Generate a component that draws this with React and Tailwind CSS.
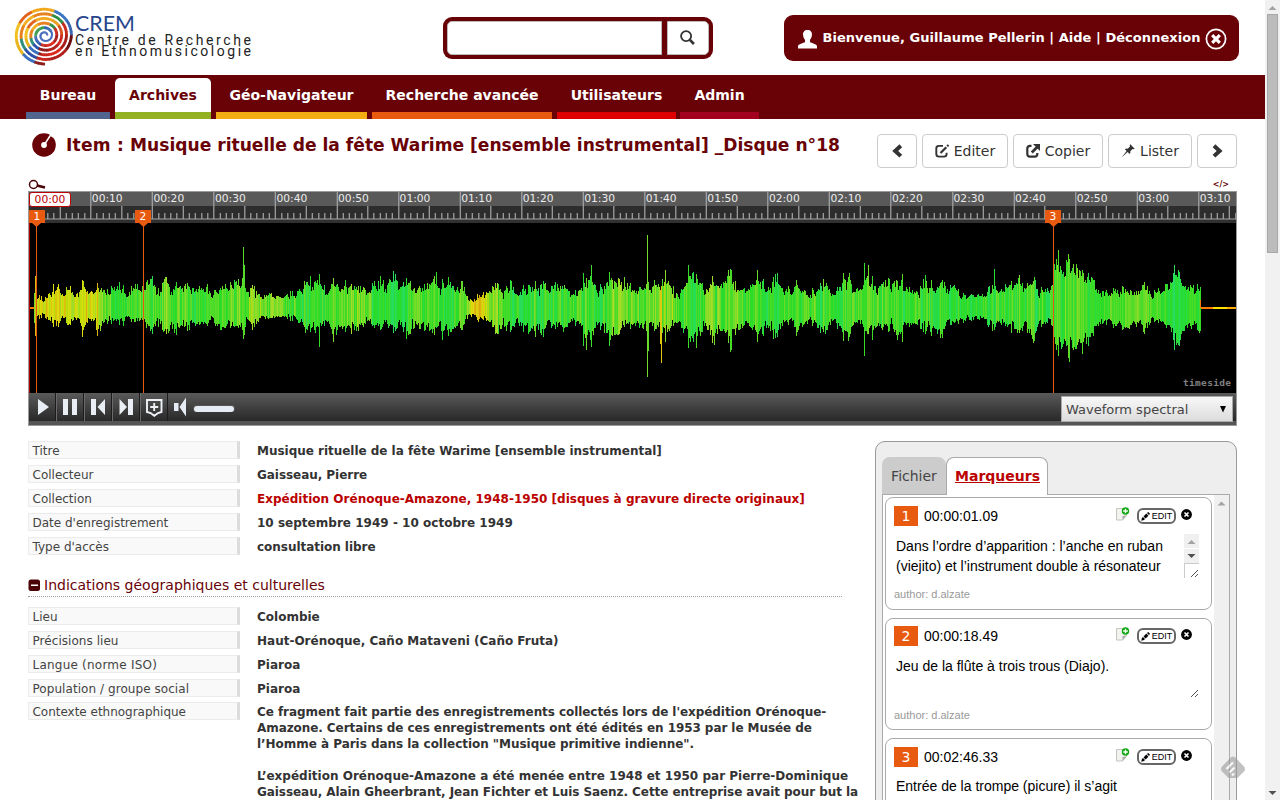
import React from "react";

const rand = (n) => {
  const s = Math.sin(n * 127.1 + 11.7) * 43758.5453;
  return s - Math.floor(s);
};

// [x, height above the axis, height below the axis]
const envelope = [
  [36,12,10],[44,11,9],[49,15,14],[51,10,9],[53,24,22],[58,23,18],[62,17,11],[68,25,21],[74,14,13],[78,15,12],[82,26,25],[86,16,13],[92,20,16],[97,24,27],
  [103,23,20],[108,15,13],[116,27,16],[122,22,16],[130,20,15],[137,21,11],[145,25,17],[152,31,27],[157,18,16],[165,30,25],[172,20,24],[183,28,22],[192,21,20],
  [205,25,21],[212,15,13],[220,20,22],[230,23,17],[237,30,24],[240,30,25],[245,24,18],[252,23,20],[258,17,16],[264,16,12],[275,13,11],[285,13,10],[298,18,14],
  [307,30,27],[314,30,26],[319,28,22],[327,15,15],[333,28,28],[345,25,25],[355,22,22],[365,17,15],[380,28,22],[386,27,20],[393,32,23],[399,24,20],[405,30,28],
  [415,19,19],[423,20,18],[429,32,32],[436,26,20],[441,24,28],[447,30,26],[455,18,21],[462,27,22],[468,11,10],[477,12,13],[485,15,12],[498,24,26],[503,13,15],
  [510,28,28],[517,17,19],[525,21,22],[540,25,27],[550,22,20],[557,23,17],[563,27,27],[572,14,14],[579,18,18],[584,34,38],[590,34,32],[597,19,18],[606,28,28],
  [615,30,33],[625,30,20],[632,18,18],[642,22,21],[650,25,22],[658,24,19],[667,32,29],[672,21,20],[676,16,18],[682,21,22],[689,34,32],[695,33,33],[705,21,22],
  [712,28,31],[720,26,25],[730,36,32],[738,20,22],[746,17,16],[757,36,34],[762,26,25],[770,20,20],[775,34,32],[783,19,15],[792,22,16],[798,25,28],[805,17,17],
  [815,18,18],[825,28,28],[832,12,12],[838,19,20],[844,33,30],[850,31,30],[855,17,14],[862,27,20],[866,32,27],[872,28,28],[877,20,22],[884,30,23],[893,22,18],
  [898,28,33],[903,31,29],[909,18,17],[917,19,21],[926,31,26],[934,20,26],[943,25,26],[953,25,17],[960,13,13],[975,15,13],[987,18,18],[993,26,22],[1000,16,14],
  [1009,24,20],[1018,29,27],[1026,22,20],[1033,29,34],[1040,18,17],[1051,19,15],[1054,50,44],[1059,54,48],[1063,38,40],[1068,52,50],[1074,40,44],[1081,40,38],
  [1086,32,38],[1092,34,29],[1098,16,16],[1110,16,16],[1121,22,22],[1130,18,22],[1137,17,16],[1143,24,24],[1151,14,14],[1160,18,14],[1168,22,18],[1174,43,42],
  [1181,27,29],[1190,22,20],[1196,22,22],[1200,19,24],
];

const spikes = {
  34: [15, 15], 35: [32, 28], 97: [25, 28], 152: [32, 26], 166: [31, 26], 243: [61, 31], 244: [43, 27], 319: [34, 39], 333: [30, 34], 393: [37, 25], 436: [36, 20],
  498: [24, 26], 583: [35, 38], 586: [30, 42], 591: [43, 39], 609: [36, 38], 647: [73, 69], 648: [26, 43], 660: [18, 36], 661: [22, 55], 665: [38, 34], 688: [43, 40],
  693: [36, 34], 696: [34, 40], 714: [22, 37], 730: [39, 44], 731: [38, 42], 757: [38, 34], 775: [34, 30], 864: [45, 48], 868: [43, 26], 902: [34, 34], 925: [33, 26],
  942: [28, 30], 994: [39, 22], 1019: [33, 25], 1058: [58, 48], 1068: [54, 50], 1082: [38, 46], 1174: [43, 42],
};

// [x, hue, amount of variation]
const hues = [
  [36,64,20],[54,60,18],[100,68,25],[106,108,26],[165,104,28],[200,116,22],[245,96,26],[275,92,26],[300,116,28],[330,118,28],[352,94,26],[375,118,26],[400,130,24],
  [425,106,28],[450,118,26],[466,98,20],[471,60,10],[479,50,8],[492,88,24],[512,122,28],[535,120,28],[575,112,30],[600,118,28],[620,88,18],[640,104,28],[670,94,28],
  [690,116,30],[730,96,26],[760,122,26],[800,112,28],[830,116,26],[880,106,28],[925,122,26],[990,116,26],[1030,114,30],[1058,122,30],[1080,99,28],[1095,121,20],
  [1130,98,16],[1160,108,16],[1172,129,12],[1200,115,16],
];

const lerp = (points, x) => {
  let i = 0;
  while (i < points.length - 2 && points[i + 1][0] < x) i += 1;
  const a = points[i];
  const b = points[i + 1];
  const t = Math.min(1, Math.max(0, (x - a[0]) / (b[0] - a[0])));
  return a.map((v, k) => v + (b[k] - v) * t);
};

const bars = [];
for (let x = 34; x <= 1200; x += 1) {
  const [, up, down] = lerp(envelope, x);
  const group = rand(Math.floor(x / 3) + 500);
  const pair = rand(Math.floor(x / 2) + 1500);
  const peak = rand(x + 5000) > 0.88 ? 0.3 : 0;
  const f = 0.44 + 0.22 * group + 0.28 * pair + 0.26 * rand(x) + peak;
  const g = 0.42 + 0.22 * group + 0.28 * pair + 0.26 * rand(x + 3000) + peak;
  const spike = spikes[x];
  const [, hue, spread] = lerp(hues, x);
  let h = hue + (rand(Math.floor(x / 3) + 900) - 0.5) * spread + (rand(x + 7000) - 0.5) * spread * 1.3;
  if (x === 660 || x === 661) h = 54;
  if (x === 34 || x === 647) h = 95;
  h = Math.max(44, Math.min(138, h));
  bars.push({
    x,
    up: Math.round(spike ? spike[0] : up * Math.min(1.15, f)),
    down: Math.round(spike ? spike[1] : down * Math.min(1.15, g)),
    color: h < 75 ? `hsl(${h} 88% 46%)` : `hsl(${h} 72% 51%)`,
  });
}

const SECOND = 6.155;

function Ruler() {
  const ticks = [];
  for (let s = 1; s <= 196; s += 1) ticks.push(s);
  return (
    <svg width="1207" height="31" className="block" fontFamily="'DejaVu Sans', sans-serif" fontSize="10.7">
      <rect width="1207" height="14" fill="#595959" />
      <rect y="14" width="1207" height="12" fill="#2d2d2d" />
      <rect y="26" width="1207" height="3" fill="#6a6a6a" />
      <rect y="28" width="1207" height="3" fill="#303030" />
      {ticks.map((s) => {
        const x = Math.round(s * SECOND * 2) / 2 - 0.3;
        const y = s % 10 === 0 ? 0 : s % 5 === 0 ? 14 : 21;
        return <rect key={s} x={x} y={y} width="1.2" height={27 - y} fill="#a6a6a6" />;
      })}
      {Array.from({ length: 19 }, (_, i) => {
        const s = (i + 1) * 10;
        const label = `0${Math.floor(s / 60)}:${String(s % 60).padStart(2, "0")}`;
        return (
          <text key={s} x={s * SECOND + 1.3} y="10" fill="#ececec">
            {label}
          </text>
        );
      })}
    </svg>
  );
}

function Waveform() {
  return (
    <svg width="1207" height="170" viewBox="29 223 1207 170" shapeRendering="crispEdges" className="block bg-black">
      <rect x="29" y="307" width="6" height="2" fill="#ff7a00" />
      {bars.map((b) => (
        <rect key={b.x} x={b.x} y={308 - b.up} width="1" height={b.up + b.down} fill={b.color} />
      ))}
      <rect x="1200" y="300" width="1" height="8" fill="#ff7a00" />
      <rect x="1201" y="307" width="12" height="2" fill="#ff7a00" />
      <rect x="1213" y="307" width="14" height="2" fill="#ffe000" />
      <rect x="1227" y="307" width="9" height="2" fill="#ffa800" />
      <text x="1183" y="386" fontFamily="'DejaVu Sans Mono', monospace" fontSize="9.500" fontWeight="bold" textLength="48" fill="#808080">
        timeside
      </text>
    </svg>
  );
}

const spiralColor = (deg, ring) => {
  if (ring === 0) return "#2b56b0";
  if (ring === 1) return deg < 90 ? "#3565b5" : deg < 180 ? "#3b9a50" : "#3560b5";
  const even = ring % 2 === 0;
  if (deg < 35) return ring > 4 ? "#3a66b4" : even ? "#c8281e" : "#d8501e";
  if (deg < 65) return ring > 4 ? "#3a76c4" : even ? "#2f8f45" : "#e8a020";
  if (deg < 115) return even ? "#e8801e" : "#f2a81e";
  if (deg < 150) return even ? "#f0b020" : "#e0641e";
  if (deg < 185) return even ? "#e8801e" : "#f2c020";
  if (deg < 215) return even ? "#2f8f7a" : "#e8b41e";
  if (deg < 245) return even ? "#2a50a8" : "#3a70c0";
  if (deg < 275) return even ? "#c8281e" : "#8e1c1c";
  if (deg < 320) return even ? "#dd2a1e" : "#b0201a";
  return ring > 4 ? "#6a1012" : even ? "#a81c1a" : "#d02a1e";
};

function Spiral() {
  const cx = 45;
  const cy = 35.5;
  const turns = 5.75;
  const steps = 300;
  const point = (t) => {
    const a = t * turns * 2 * Math.PI;
    const r = 2 + t * 26.6;
    return [cx + 1.05 * r * Math.cos(a), cy - r * Math.sin(a), a, r];
  };
  return (
    <g fill="none">
      {Array.from({ length: steps }, (_, i) => {
        const [x1, y1, a, r] = point(i / steps);
        const [x2, y2] = point(Math.min(1, (i + 1.3) / steps));
        const deg = ((a * 180) / Math.PI) % 360;
        return <path key={i} d={`M${x1} ${y1}L${x2} ${y2}`} stroke={spiralColor(deg, Math.floor(r / 4.8))} strokeWidth={r < 7 ? 2 : 2.8} />;
      })}
    </g>
  );
}

function Logo() {
  return (
    <svg width="265" height="75" className="block shrink-0">
      <Spiral />
      <text x="75" y="30.500" fontFamily="Lato, sans-serif" fontSize="20.500" textLength="60" lengthAdjust="spacingAndGlyphs" fill="#27468c">CREM</text>
      <g fontFamily="Roboto, sans-serif" fontSize="14" fill="#222">
        <text x="75" y="44.500" textLength="176">Centre de Recherche</text>
        <text x="75" y="55.500" textLength="176">en Ethnomusicologie</text>
      </g>
    </svg>
  );
}

function Header() {
  return (
    <header className="flex h-[75px] shrink-0 items-start">
      <Logo />
      <div className="mt-[17px] ml-[178px] flex h-[42px] w-[270px] gap-[5px] rounded-[9px] bg-[#690207] p-1">
        <div className="w-[215px] rounded-l-[5px] border border-[#bbb] bg-white" />
        <div className="flex flex-1 items-center justify-center rounded-r-[5px] border border-[#bbb] bg-white">
          <svg width="15" height="15" viewBox="0 0 14 14" fill="none" stroke="#333" className="-mt-px -ml-[2px]">
            <circle cx="5.700" cy="5.700" r="4.700" strokeWidth="1.700" />
            <path d="M9 9l4 4" strokeWidth="2.500" />
          </svg>
        </div>
      </div>
      <div className="mt-[15px] ml-[71px] flex h-[46px] w-[455px] items-center rounded-[9px] bg-[#690207] pl-[13px] text-[13px] font-bold whitespace-nowrap text-white">
        <svg width="21" height="21" viewBox="0 0 21 21" fill="#fff" className="mt-[2px] shrink-0">
          <path d="M10.500 1C7.400 1 5.700 3 6.100 6.300c.2 2.200 1.100 3.400 1.900 4.500v2.100C6.800 13.900 1 15 1 17.200V19.500h19V17.200c0-2.200-5.800-3.300-7-4.300v-2.100c.8-1.100 1.700-2.300 1.900-4.500C15.300 3 13.600 1 10.500 1z" />
        </svg>
        <span className="ml-[4.500px] tracking-[0.045px]">Bienvenue, Guillaume Pellerin | Aide | Déconnexion</span>
        <svg width="22" height="22" viewBox="0 0 22 22" fill="none" stroke="#fff" className="ml-1 mt-px shrink-0">
          <circle cx="11" cy="11" r="9.600" strokeWidth="1.700" />
          <path d="M7.200 7.200l7.600 7.600M14.800 7.200l-7.600 7.600" strokeWidth="3.200" />
        </svg>
      </div>
    </header>
  );
}

const tabs = [
  ["Bureau", "w-[84px] border-[#52658f] text-white"],
  ["Archives", "ml-[5px] w-[96px] rounded-t-[5px] bg-white border-[#93b122] text-[#690207]"],
  ["Géo-Navigateur", "ml-[5px] w-[151px] border-[#f3ae14] text-white"],
  ["Recherche avancée", "ml-[5px] w-[180px] border-[#e85a10] text-white"],
  ["Utilisateurs", "ml-[5px] w-[119px] border-[#de0000] text-white"],
  ["Admin", "ml-1 w-[79px] border-[#a3001f] text-white"],
];

function Nav() {
  return (
    <nav className="flex h-[44px] shrink-0 bg-[#690207] pt-[3px] pl-[26px] text-[14px] font-bold">
      {tabs.map(([name, cls]) => (
        <a key={name} className={`flex h-[41px] items-center justify-center border-b-[7px] whitespace-nowrap ${cls}`}>
          {name}
        </a>
      ))}
    </nav>
  );
}

const glyphs = {
  left: <path d="M10.800 1.800L5.200 6.900l5.600 5.200" fill="none" stroke="#333" strokeWidth="4" />,
  right: <path d="M4 1.800L9.600 6.900L4 12.100" fill="none" stroke="#333" strokeWidth="4" />,
  edit: (
    <g fill="none" stroke="#333">
      <path d="M8 1.900H4Q1.300 1.900 1.300 4.500V10Q1.300 12.600 4 12.600H9Q11.600 12.600 11.600 10V8.800" strokeWidth="1.900" />
      <path d="M5.500 9L11.300 3.200" strokeWidth="2.200" />
      <path d="M12.200 2.300L13.500 1" strokeWidth="2.200" />
    </g>
  ),
  share: (
    <g fill="none" stroke="#333">
      <path d="M5.500 1.900H4Q1.300 1.900 1.300 4.500V10Q1.300 12.600 4 12.600H8.700Q11.300 12.600 11.300 10V9" strokeWidth="2.200" />
      <path d="M5.800 8.500L11 3.300" strokeWidth="2.800" />
      <path d="M7 0H14V7z" fill="#333" stroke="none" />
    </g>
  ),
  pin: <path d="M9.300.3L13.700 4.700 12.600 5.300 11.600 5 9.300 7.300Q9.700 8.900 8.700 9.900L6.600 7.900.600 13.400 5.600 6.900 3.900 5.200Q5 4.300 6.700 4.700L9 2.400 8.700 1.300z" fill="#333" />,
};

function Button({ glyph, label, cls }) {
  return (
    <button className={`flex h-[34px] items-center justify-center gap-[5px] rounded-[4px] border border-[#ccc] bg-white text-[14px] text-[#333] ${cls}`}>
      <svg width="14" height="14" viewBox="0 0 14 14" className="-mt-px shrink-0">{glyphs[glyph]}</svg>
      {label && <span>{label}</span>}
    </button>
  );
}

function TitleRow() {
  return (
    <div className="flex h-[72px] shrink-0 pt-[15px] pr-[28px] pl-[32px]">
      <svg width="24" height="24" viewBox="0 0 24 24" className="mt-[-1px] shrink-0">
        <circle cx="12" cy="12" r="11.800" fill="#690207" />
        <circle cx="12" cy="12" r="2.900" fill="#fff" />
        <path d="M12.800 11L18.300 2.500" stroke="#fff" strokeWidth="1.500" />
        <path d="M17.700 0L22.500 3 20.500 4.600 18 2.600z" fill="#fff" />
      </svg>
      <h1 className="ml-[10px] w-[811px] text-[17.100px] leading-[22px] font-bold whitespace-nowrap text-[#690207]">
        <span className="tracking-[0.200px]">Item : </span>Musique rituelle de la fête Warime [ensemble instrumental] _Disque n°18
      </h1>
      <div className="flex gap-[5px]">
        <Button glyph="left" cls="w-[40px]" />
        <Button glyph="edit" label="Editer" cls="w-[86px]" />
        <Button glyph="share" label="Copier" cls="w-[90px]" />
        <Button glyph="pin" label="Lister" cls="w-[84px]" />
        <Button glyph="right" cls="w-[40px]" />
      </div>
    </div>
  );
}

function Marker({ n, cls, line }) {
  return (
    <div className={`absolute top-[18px] w-4 ${cls}`}>
      <div className="h-[13px] bg-[#e85a10] text-center text-[10.700px] leading-[13px] text-white">{n}</div>
      <svg width="16" height="170" className="block">
        <path d={`M${line - 4} 0h9l-4.500 4z`} fill="#e85a10" />
        <rect x={line} width="1" height="170" fill="#e85a10" />
      </svg>
    </div>
  );
}

const controls = [
  <path d="M9 6L20 14 9 22z" />,
  <path d="M6 6h5v16H6zM15 6h5v16h-5z" />,
  <path d="M6 6h5v16H6zM20 6v16L12.500 14z" />,
  <path d="M6.500 6v16L14 14zM15 6h5v16h-5z" />,
  <path d="M6 7h14.500v12l-3.500 1-3.700 2.800-3.700-2.800-3.600-1zM13.200 10v8M9.200 14h8" fill="none" stroke="#eef2f6" strokeWidth="1.900" />,
];

function Player() {
  return (
    <section className="relative ml-[28px] flex h-[235px] w-[1209px] shrink-0 flex-col border border-[#9a9a9a] bg-[#555]">
      <Ruler />
      <Waveform />
      <div className="flex h-[28px] bg-linear-to-b from-[#5a5a5a] to-[#292929]">
        {controls.map((c, i) => (
          <div key={i} className="w-[28px] border-r border-l border-r-[#1c1c1c] border-l-[#6a6a6a] first:w-[27px] first:border-l-0">
            <svg width="26" height="28" fill="#e9eef4">{c}</svg>
          </div>
        ))}
        <svg width="70" height="28" fill="#e6ecf4" className="ml-px">
          <path d="M5 10h4.500v8H5zM10.500 14L17 4.500v19z" />
          <rect x="24" y="12" width="42" height="7" rx="3.500" fill="#555" />
          <rect x="25" y="13" width="40" height="6" rx="3" />
        </svg>
        <div className="mt-[3px] mr-[3px] ml-auto flex h-[26px] w-[172px] items-center justify-between border border-[#a9a9a9] bg-linear-to-b from-[#f8f8f8] to-[#dcdcdc] pr-[6px] pl-1 text-[13px] text-[#444]">
          <span className="mt-px">Waveform spectral</span>
          <svg width="6" height="7"><path d="M0 0h6L3 6.500z" /></svg>
        </div>
      </div>
      <div className="absolute top-[26px] left-0 h-[175px] w-px bg-[#b00000]" />
      <div className="absolute top-0 left-0 h-[15px] w-[42px] rounded-[3px] border border-[#bb0000] bg-white text-center text-[10.700px] leading-[13px] text-[#bb0000]">00:00</div>
      <Marker n="1" cls="left-0" line={7} />
      <Marker n="2" cls="left-[106px]" line={8} />
      <Marker n="3" cls="left-[1016px]" line={8} />
    </section>
  );
}

function Field({ label, children, cls = "h-[24px]", labelCls = "" }) {
  return (
    <div className={`flex ${cls}`}>
      <div className="h-[18px] w-[212px] shrink-0 border border-r-[3px] border-[#ebebeb] border-r-[#dcdcdc] bg-[#f9f9f9] pl-[3.500px] text-[12px] leading-[18px] text-[#444]">
        <span className={labelCls}>{label}</span>
      </div>
      <div className="ml-[17px] pt-[2px] text-[12px] leading-[16px] font-bold whitespace-nowrap text-[#333]">{children}</div>
    </div>
  );
}

function Details() {
  return (
    <div className="w-[847px] shrink-0">
      <Field label="Titre"><span className="tracking-[-0.025px]">Musique rituelle de la fête Warime [ensemble instrumental]</span></Field>
      <Field label="Collecteur"><span className="tracking-[-0.050px]">Gaisseau, Pierre</span></Field>
      <Field label="Collection"><a className="tracking-[0.015px] text-[#bb0000]">Expédition Orénoque-Amazone, 1948-1950 [disques à gravure directe originaux]</a></Field>
      <Field label="Date d'enregistrement"><span className="tracking-[0.020px]">10 septembre 1949 - 10 octobre 1949</span></Field>
      <Field label="Type d'accès"><span className="tracking-[-0.040px]">consultation libre</span></Field>
      <div className="mt-[15px] mb-[10px] flex h-[21px] w-[814px] items-center gap-1 border-b border-dotted border-[#999] pb-[2px] text-[14px] text-[#690207]">
        <svg width="12" height="12"><rect x=".5" y=".5" width="11.500" height="11.500" rx="2.500" fill="#4a0306" /><rect x="3" y="5.500" width="7" height="1.500" fill="#fff" /></svg>
        Indications géographiques et culturelles
      </div>
      <Field label="Lieu">Colombie</Field>
      <Field label="Précisions lieu" labelCls="tracking-[0.050px]">Haut-Orénoque, Caño Mataveni (Caño Fruta)</Field>
      <Field label="Langue (norme ISO)" labelCls="tracking-[0.220px]">Piaroa</Field>
      <Field label="Population / groupe social" cls="h-[23px]" labelCls="tracking-[0.060px]">Piaroa</Field>
      <Field label="Contexte ethnographique" cls="h-[120px]" labelCls="tracking-[-0.020px]">
        <span className="tracking-[-0.065px]">Ce fragment fait partie des enregistrements collectés lors de l'expédition Orénoque-</span><br />
        <span className="tracking-[-0.075px]">Amazone. Certains de ces enregistrements ont été édités en 1953 par le Musée de</span><br />
        <span className="tracking-[-0.035px]">l’Homme à Paris dans la collection "Musique primitive indienne".</span><br />
        <br />
        <span className="tracking-[0.010px]">L’expédition Orénoque-Amazone a été menée entre 1948 et 1950 par Pierre-Dominique</span><br />
        <span className="tracking-[-0.062px]">Gaisseau, Alain Gheerbrant, Jean Fichter et Luis Saenz. Cette entreprise avait pour but la</span>
      </Field>
    </div>
  );
}

function Card({ n, time, lines, scroll, cls, textCls = "mt-2", authorCls = "mt-[9px]" }) {
  return (
    <div className={`w-[327px] shrink-0 rounded-[8px] border border-[#aaa] bg-white px-2 font-['Liberation_Sans',Arial,sans-serif] text-black ${cls}`}>
      <div className="flex h-5">
        <div className="h-5 w-6 bg-[#e85a10] text-center font-['DejaVu_Sans',sans-serif] text-[14px] leading-[20px] text-white">{n}</div>
        <span className="ml-[6px] w-[192px] text-[14px] leading-[20px]">{time}</span>
        <svg width="14" height="14" className="mt-[1px] shrink-0">
          <path d="M.5 1.500h10v7l-4 4.500h-6z" fill="#f2f2ee" stroke="#c4c4c0" />
          <path d="M10.500 8.500l-4 4.500v-4z" fill="#aaa" />
          <circle cx="9.500" cy="4" r="3.700" fill="#10a810" />
          <path d="M9.500 1.700v4.600M7.200 4h4.600" stroke="#fff" strokeWidth="1.300" />
        </svg>
        <div className="mt-[2px] ml-[7px] flex h-4 w-[39px] shrink-0 items-center justify-center gap-[2px] rounded-[6px] border-2 border-[#666] text-[9px] leading-[10px]">
          <svg width="9" height="9"><path d="M.3 8.700l.6-2.700L1.900 5 4 7.100 3 8.100zM2.500 4.400L5.300 1.600 7.400 3.700 4.600 6.500zM6 1L7.200 0 9 1.800 8 3z" /></svg>
          EDIT
        </div>
        <svg width="11" height="11" className="mt-[3px] ml-[5px] shrink-0">
          <circle cx="5.500" cy="5.500" r="5.400" />
          <path d="M3.500 3.500l4 4M7.500 3.500l-4 4" stroke="#fff" strokeWidth="1.600" />
        </svg>
      </div>
      <div className={`flex h-[44px] pl-[2px] ${textCls}`}>
        <div className="w-[288px] pt-[2px] text-[14px] leading-[20px] whitespace-nowrap">
          {lines.map((l) => <div key={l}>{l}</div>)}
        </div>
        <svg width="15" height="44" className="shrink-0">
          {scroll && (
            <g>
              <rect width="15" height="29" fill="#f0f0f0" />
              <rect y="14" width="15" height="1" fill="#fff" />
              <path d="M3.500 10h8l-4-4z" fill="#a3a3a3" />
              <path d="M3.500 20h8l-4 4z" fill="#505050" />
              <path d="M0 29.500h15M.5 29v15" stroke="#ccc" fill="none" />
            </g>
          )}
          <path d="M7 43l7-7M11 43l3-3" stroke="#555" />
        </svg>
      </div>
      <div className={`text-[11px] leading-[14px] text-[#999] ${authorCls}`}>author: d.alzate</div>
    </div>
  );
}

function Sidebar() {
  return (
    <aside className="h-[420px] w-[362px] shrink-0 rounded-[10px] border border-[#999] bg-[#eee] px-[6px] pt-[15px]">
      <div className="flex h-[38px]">
        <div className="h-[37px] w-[64px] rounded-t-[8px] bg-[#ccc] text-center text-[14px] leading-[38px] text-[#444]">Fichier</div>
        <div className="relative z-10 h-[38px] w-[102px] rounded-t-[8px] border border-b-0 border-[#aaa] bg-white pl-px text-center text-[14px] leading-[37px] font-bold text-[#bb0000] underline">Marqueurs</div>
      </div>
      <div className="-mt-px flex h-[380px] w-[348px] border border-[#aaa] bg-white">
        <div className="flex w-[331px] flex-col pt-[2px] pl-[2px]">
          <Card n="1" time="00:00:01.09" scroll cls="h-[113px] pt-2" lines={["Dans l’ordre d’apparition : l’anche en ruban", "(viejito) et l’instrument double à résonateur"]} />
          <Card n="2" time="00:00:18.49" cls="mt-2 h-[112px] pt-[7px]" authorCls="mt-[10px]" lines={["Jeu de la flûte à trois trous (Diajo)."]} />
          <Card n="3" time="00:02:46.33" cls="mt-2 h-[113px] pt-2" textCls="mt-[7px]" lines={["Entrée de la trompe (picure) il s’agit"]} />
        </div>
        <div className="w-[15px] bg-[#f0f0f0]">
          <svg width="15" height="15"><path d="M3.500 10.500h8l-4-4z" fill="#a3a3a3" /></svg>
        </div>
      </div>
    </aside>
  );
}

export default function App() {
  return (
    <div className="relative flex h-[800px] w-[1280px] overflow-hidden bg-white font-['DejaVu_Sans',Verdana,sans-serif]">
      <div className="flex w-[1265px] flex-col">
        <Header />
        <Nav />
        <TitleRow />
        <div className="-mt-[12px] flex h-[12px] shrink-0 items-end justify-between pr-[36px] pl-[28px] text-[8px] leading-[10px] font-bold text-[#690207]">
          <svg width="18" height="12" fill="none" stroke="#4a0306">
            <circle cx="5.500" cy="5.500" r="4" strokeWidth="1.500" />
            <path d="M9 6.500l8 2" strokeWidth="2.400" />
          </svg>
          <span className="pb-[1px]">&lt;/&gt;</span>
        </div>
        <Player />
        <main className="flex pt-[15px] pl-[28px]">
          <Details />
          <Sidebar />
        </main>
      </div>
      <div className="flex w-[15px] flex-col items-center bg-[#f1f1f1]">
        <svg width="15" height="14" className="shrink-0"><path d="M3.500 10h8l-4-4z" fill="#a3a3a3" /></svg>
        <div className="h-[239px] w-[11px] border border-[#a8a8a8] bg-[#bcbcbc]" />
        <svg width="15" height="15" className="mt-auto"><path d="M3.500 6h8l-4 4z" fill="#505050" /></svg>
      </div>
      <svg width="26" height="26" className="absolute top-[756px] left-[1220px] opacity-60">
        <path d="M10.500 1.700Q13-.7 15.500 1.700L24 10.500Q26 13 24 15.500L17.500 22H8.500L2 15.500Q0 13 2 10.500z" fill="#9b9b9b" />
        <path d="M6.500 13l6.500-6.500M9.500 16.500l5-5M12 19.500l2-2" stroke="#fff" strokeWidth="2.200" />
      </svg>
    </div>
  );
}
